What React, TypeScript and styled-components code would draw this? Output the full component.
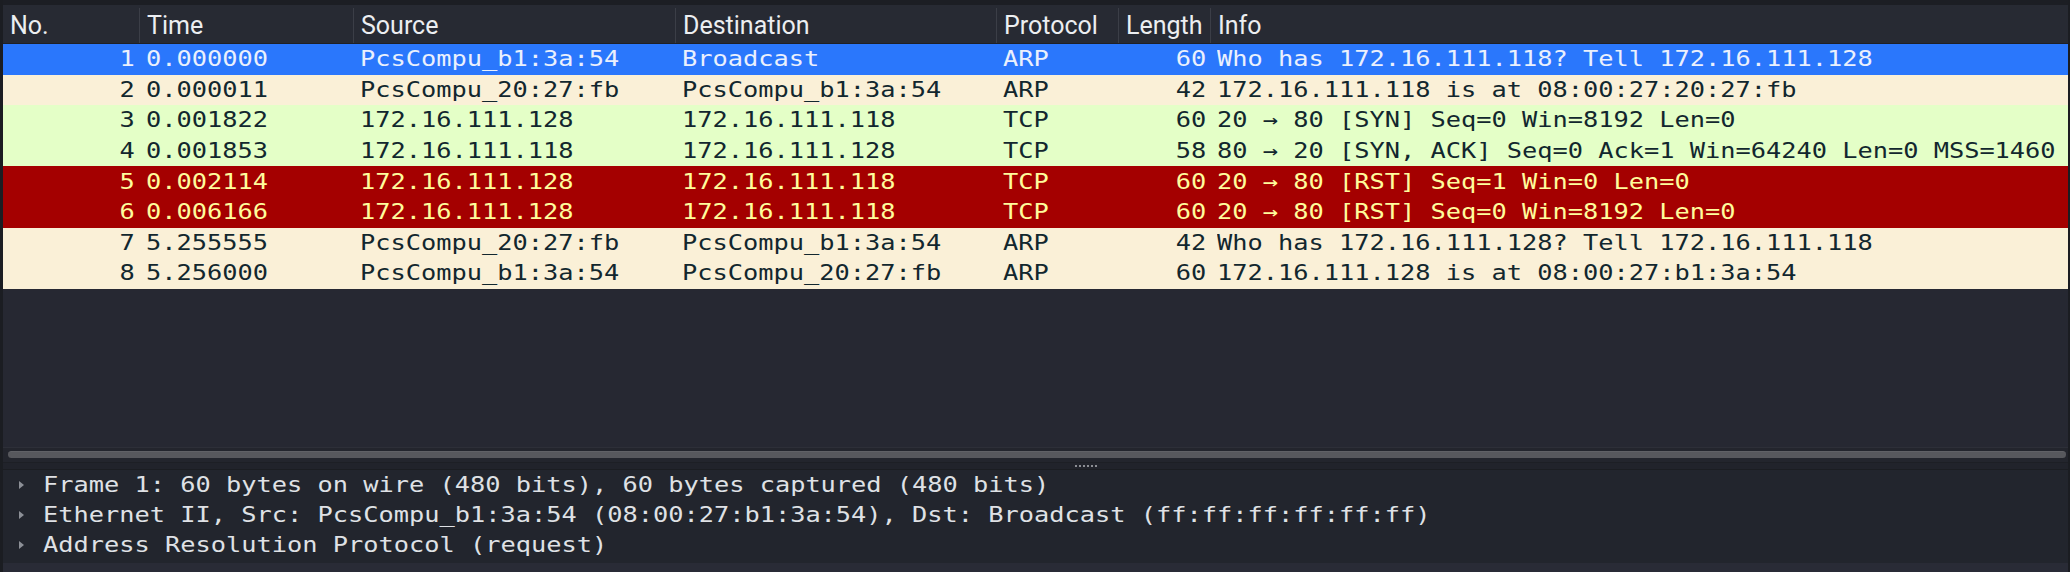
import React from "react";
import styled, { createGlobalStyle, css } from "styled-components";

type Kind = "selected" | "arp" | "tcp" | "rst";

type Packet = {
  no: number;
  time: string;
  source: string;
  destination: string;
  protocol: string;
  length: number;
  info: string;
  kind: Kind;
};

const packets: Packet[] = [
  { no: 1, time: "0.000000", source: "PcsCompu_b1:3a:54", destination: "Broadcast", protocol: "ARP", length: 60, info: "Who has 172.16.111.118? Tell 172.16.111.128", kind: "selected" },
  { no: 2, time: "0.000011", source: "PcsCompu_20:27:fb", destination: "PcsCompu_b1:3a:54", protocol: "ARP", length: 42, info: "172.16.111.118 is at 08:00:27:20:27:fb", kind: "arp" },
  { no: 3, time: "0.001822", source: "172.16.111.128", destination: "172.16.111.118", protocol: "TCP", length: 60, info: "20 → 80 [SYN] Seq=0 Win=8192 Len=0", kind: "tcp" },
  { no: 4, time: "0.001853", source: "172.16.111.118", destination: "172.16.111.128", protocol: "TCP", length: 58, info: "80 → 20 [SYN, ACK] Seq=0 Ack=1 Win=64240 Len=0 MSS=1460", kind: "tcp" },
  { no: 5, time: "0.002114", source: "172.16.111.128", destination: "172.16.111.118", protocol: "TCP", length: 60, info: "20 → 80 [RST] Seq=1 Win=0 Len=0", kind: "rst" },
  { no: 6, time: "0.006166", source: "172.16.111.128", destination: "172.16.111.118", protocol: "TCP", length: 60, info: "20 → 80 [RST] Seq=0 Win=8192 Len=0", kind: "rst" },
  { no: 7, time: "5.255555", source: "PcsCompu_20:27:fb", destination: "PcsCompu_b1:3a:54", protocol: "ARP", length: 42, info: "Who has 172.16.111.128? Tell 172.16.111.118", kind: "arp" },
  { no: 8, time: "5.256000", source: "PcsCompu_b1:3a:54", destination: "PcsCompu_20:27:fb", protocol: "ARP", length: 60, info: "172.16.111.128 is at 08:00:27:b1:3a:54", kind: "arp" },
];

const details = [
  "Frame 1: 60 bytes on wire (480 bits), 60 bytes captured (480 bits)",
  "Ethernet II, Src: PcsCompu_b1:3a:54 (08:00:27:b1:3a:54), Dst: Broadcast (ff:ff:ff:ff:ff:ff)",
  "Address Resolution Protocol (request)",
];

const rowColors: Record<Kind, { bg: string; fg: string }> = {
  selected: { bg: "#2a77fc", fg: "#eaf0fd" },
  arp: { bg: "#faf0d7", fg: "#12272e" },
  tcp: { bg: "#e4ffc7", fg: "#12272e" },
  rst: { bg: "#a40000", fg: "#fffc9c" },
};

const COLUMNS = "136px 214px 322px 321px 122px 92px 1fr";

const mono = css`
  font-family: "DejaVu Sans Mono", "Liberation Mono", monospace;
  font-size: 21px;
`;

const GlobalStyle = createGlobalStyle`
  html, body {
    margin: 0;
    padding: 0;
    background: #23262f;
    overflow: hidden;
  }
  * {
    box-sizing: border-box;
  }
`;

const Window = styled.div`
  width: 2070px;
  height: 572px;
  display: flex;
  flex-direction: column;
  background: #23262f;
  border-left: 3px solid #1b1d22;
  border-right: 2px solid #1b1d22;
`;

const TopStrip = styled.div`
  height: 5px;
  background: #1c1e24;
`;

const PacketList = styled.div`
  height: 443px;
  display: flex;
  flex-direction: column;
  background: #262832;
`;

const Header = styled.div`
  display: grid;
  grid-template-columns: ${COLUMNS};
  height: 39px;
  background: #272a33;
  border-bottom: 1px solid #1e2026;
`;

const HeaderCell = styled.div<{ $first?: boolean }>`
  display: flex;
  align-items: center;
  padding: 0 7px;
  font-family: Roboto, "Noto Sans", sans-serif;
  font-size: 25px;
  color: #eceef1;
  white-space: nowrap;
  border-left: ${({ $first }) => ($first ? "none" : "1px solid #3b3e47")};
  margin-top: 3px;
`;

const Row = styled.div<{ $kind: Kind }>`
  display: grid;
  grid-template-columns: ${COLUMNS};
  height: 30.6px;
  background: ${({ $kind }) => rowColors[$kind].bg};
  color: ${({ $kind }) => rowColors[$kind].fg};
  ${mono};
`;

const Cell = styled.div<{ $right?: boolean }>`
  display: flex;
  align-items: center;
  justify-content: ${({ $right }) => ($right ? "flex-end" : "flex-start")};
  padding: ${({ $right }) => ($right ? "0 4px 0 0" : "0 0 0 7px")};
  white-space: nowrap;
  overflow: hidden;
`;

const Text = styled.span<{ $right?: boolean }>`
  display: inline-block;
  transform: scaleX(1.206);
  transform-origin: ${({ $right }) => ($right ? "right" : "left")} center;
  white-space: pre;
`;

const EmptyArea = styled.div`
  flex: 1;
  border-bottom: 1px solid #2d2f38;
`;

const ScrollTrack = styled.div`
  height: 14px;
  padding: 3px 2px 4px 5px;
  background: #23252d;
`;

const ScrollThumb = styled.div`
  height: 7px;
  border-radius: 4px;
  background: #57585d;
  border-top: 1px solid #606166;
`;

const Splitter = styled.div`
  height: 8px;
  display: flex;
  justify-content: center;
  align-items: center;
  background: #21232b;
  border-top: 1px solid #1d1f25;
  border-bottom: 1px solid #1b1d22;
  padding-left: 100px;
`;

const Grip = styled.div`
  display: flex;
  gap: 2px;
`;

const GripDot = styled.span`
  width: 2px;
  height: 2px;
  background: #8b8d93;
`;

const DetailsPane = styled.div`
  flex: 1;
  display: flex;
  flex-direction: column;
  padding-top: 0;
  background: #22252d;
`;

const DetailLine = styled.div`
  display: flex;
  align-items: center;
  height: 30px;
  color: #dfe1e5;
  ${mono};
  white-space: nowrap;
`;

const Expander = styled.span`
  width: 40px;
  display: flex;
  justify-content: flex-start;
  padding-left: 15px;
`;

const BottomStrip = styled.div`
  height: 9px;
  background: #292b36;
`;

const Arrow = () => (
  <svg width="7" height="10" viewBox="0 0 7 10">
    <path d="M1 1 L6 5 L1 9 Z" fill="#8c8f96" />
  </svg>
);

export default function App() {
  return (
    <>
      <GlobalStyle />
      <Window>
        <TopStrip />
        <PacketList>
          <Header>
            <HeaderCell $first>No.</HeaderCell>
            <HeaderCell>Time</HeaderCell>
            <HeaderCell>Source</HeaderCell>
            <HeaderCell>Destination</HeaderCell>
            <HeaderCell>Protocol</HeaderCell>
            <HeaderCell>Length</HeaderCell>
            <HeaderCell>Info</HeaderCell>
          </Header>
          {packets.map((p) => (
            <Row key={p.no} $kind={p.kind}>
              <Cell $right>
                <Text $right>{p.no}</Text>
              </Cell>
              <Cell>
                <Text>{p.time}</Text>
              </Cell>
              <Cell>
                <Text>{p.source}</Text>
              </Cell>
              <Cell>
                <Text>{p.destination}</Text>
              </Cell>
              <Cell>
                <Text>{p.protocol}</Text>
              </Cell>
              <Cell $right>
                <Text $right>{p.length}</Text>
              </Cell>
              <Cell>
                <Text>{p.info}</Text>
              </Cell>
            </Row>
          ))}
          <EmptyArea />
        </PacketList>
        <ScrollTrack>
          <ScrollThumb />
        </ScrollTrack>
        <Splitter>
          <Grip>
            {[0, 1, 2, 3, 4, 5].map((i) => (
              <GripDot key={i} />
            ))}
          </Grip>
        </Splitter>
        <DetailsPane>
          {details.map((line) => (
            <DetailLine key={line}>
              <Expander>
                <Arrow />
              </Expander>
              <Text>{line}</Text>
            </DetailLine>
          ))}
        </DetailsPane>
        <BottomStrip />
      </Window>
    </>
  );
}
